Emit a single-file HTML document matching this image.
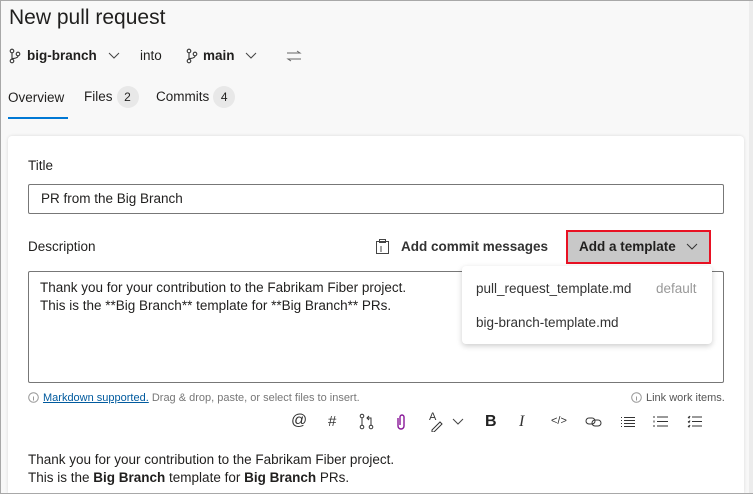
<!DOCTYPE html>
<html><head><meta charset="utf-8"><style>
*{box-sizing:border-box;margin:0;padding:0}
html,body{width:753px;height:494px;overflow:hidden}
body{background:#f8f8f8;font-family:"Liberation Sans",sans-serif;color:#201f1e;position:relative}
.frame{position:absolute;left:0;top:0;width:753px;height:494px;border:1px solid #a8a8a8;border-right:none;z-index:5;pointer-events:none}
.a{position:absolute;white-space:nowrap}
.card{position:absolute;left:8px;top:136px;width:736px;height:357px;background:#fff;border-radius:4px 4px 0 0;box-shadow:0 0 3px rgba(0,0,0,.12)}
.badge{display:inline-block;background:#e8e8e8;border-radius:11px;width:22px;height:22px;text-align:center;line-height:22px;font-size:12px;margin-left:4px}
svg{position:absolute}
</style></head><body>
<div class="frame"></div>
<div class="a" style="right:0;top:0;width:4px;height:494px;background:#ececec"></div>
<div class="a" style="left:9px;top:6px;font-size:21px;">New pull request</div>

<svg style="left:9px;top:48px" width="12" height="16" viewBox="0 0 12 16" fill="none" stroke="#333" stroke-width="1.1"><circle cx="3" cy="3" r="1.8"/><circle cx="3" cy="13" r="1.8"/><circle cx="9" cy="6" r="1.8"/><path d="M3 5v6M9 8c0 3-6 2-6 3"/></svg>
<div class="a" style="left:27px;top:48px;font-size:13.5px;font-weight:bold">big-branch</div>
<svg style="left:108px;top:52px" width="12" height="8"><path d="M1 1l5 5 5-5" stroke="#444" fill="none"/></svg>
<div class="a" style="left:140px;top:48px;font-size:13.5px">into</div>
<svg style="left:186px;top:48px" width="12" height="16" viewBox="0 0 12 16" fill="none" stroke="#333" stroke-width="1.1"><circle cx="3" cy="3" r="1.8"/><circle cx="3" cy="13" r="1.8"/><circle cx="9" cy="6" r="1.8"/><path d="M3 5v6M9 8c0 3-6 2-6 3"/></svg>
<div class="a" style="left:203px;top:48px;font-size:13.5px;font-weight:bold">main</div>
<svg style="left:245px;top:52px" width="12" height="8"><path d="M1 1l5 5 5-5" stroke="#444" fill="none"/></svg>
<svg style="left:286px;top:50px" width="16" height="12"><path d="M1 3h13l-3-2M15 9H2l3 2" stroke="#666" fill="none"/></svg>

<div class="a" style="left:8px;top:90px;font-size:13.5px">Overview</div>
<div class="a" style="left:8px;top:117px;width:60px;height:2px;background:#0078d4"></div>
<div class="a" style="left:84px;top:86px;font-size:13.5px;line-height:22px">Files<span class="badge">2</span></div>
<div class="a" style="left:156px;top:86px;font-size:13.5px;line-height:22px">Commits<span class="badge">4</span></div>

<div class="card"></div>
<div class="a" style="left:28px;top:158px;font-size:13.5px">Title</div>
<div class="a" style="left:28px;top:184px;width:696px;height:30px;border:1px solid #777;border-radius:2px;font-size:13.5px;padding:6px 12px">PR from the Big Branch</div>
<div class="a" style="left:28px;top:239px;font-size:13.5px">Description</div>
<svg style="left:375px;top:238px" width="16" height="17" fill="none" stroke="#444"><rect x="1.5" y="3.5" width="12" height="12"/><rect x="4.5" y="1.5" width="6" height="3"/><path d="M6 8v6"/></svg>
<div class="a" style="left:401px;top:239px;font-size:13.5px;font-weight:bold;color:#333">Add commit messages</div>
<div class="a" style="left:566px;top:230px;width:145px;height:34px;background:#c8c8c8;border:2px solid #e81123"></div>
<div class="a" style="left:579px;top:239px;font-size:13.5px;font-weight:bold">Add a template</div>
<svg style="left:686px;top:243px" width="12" height="8"><path d="M1 1l5 5 5-5" stroke="#333" fill="none"/></svg>

<div class="a" style="left:28px;top:271px;width:696px;height:112px;border:1px solid #777;border-radius:2px;font-size:13.5px;line-height:18px;padding:7px 11px">Thank you for your contribution to the Fabrikam Fiber project.<br>This is the **Big Branch** template for **Big Branch** PRs.</div>
<div class="a" style="left:462px;top:266px;width:250px;height:78px;background:#fff;border-radius:4px;box-shadow:0 2px 6px rgba(0,0,0,.2)"></div>
<div class="a" style="left:476px;top:281px;font-size:13.5px;color:#333">pull_request_template.md</div>
<div class="a" style="left:656px;top:281px;font-size:13.5px;color:#999">default</div>
<div class="a" style="left:476px;top:315px;font-size:13.5px;color:#333">big-branch-template.md</div>

<svg style="left:28px;top:392px" width="11" height="11"><circle cx="5.5" cy="5.5" r="4.8" stroke="#999" fill="none"/><path d="M5.5 4.5v4" stroke="#999"/></svg>
<div class="a" style="left:43px;top:392px;font-size:11px;color:#777"><span style="color:#005a9e;text-decoration:underline">Markdown supported.</span> Drag &amp; drop, paste, or select files to insert.</div>
<svg style="left:631px;top:392px" width="11" height="11"><circle cx="5.5" cy="5.5" r="4.8" stroke="#999" fill="none"/><path d="M5.5 4.5v4" stroke="#999"/></svg>
<div class="a" style="left:646px;top:392px;font-size:11px;color:#555">Link work items.</div>

<div class="a" style="left:291px;top:412px;font-size:16px;color:#333">@</div>
<div class="a" style="left:328px;top:413px;font-size:15px;color:#333">#</div>
<svg style="left:359px;top:413px" width="16" height="18" fill="none" stroke="#333"><circle cx="3" cy="3" r="1.8"/><circle cx="3" cy="14" r="1.8"/><circle cx="12" cy="14" r="1.8"/><path d="M3 5v7M12 12V5H8M10 3L8 5l2 2"/></svg>
<svg style="left:396px;top:413px" width="10" height="18" fill="none" stroke="#881798" stroke-width="1.4"><path d="M2 5v8a3 3 0 006 0V4a2 2 0 00-4 0v8"/></svg>
<div class="a" style="left:429px;top:411px;font-size:11px;color:#333">A</div>
<svg style="left:430px;top:420px" width="14" height="12" fill="none" stroke="#333"><path d="M2 10l8-8 2 2-8 8H2z"/></svg>
<svg style="left:452px;top:418px" width="12" height="8"><path d="M1 1l5 5 5-5" stroke="#444" fill="none"/></svg>
<div class="a" style="left:485px;top:413px;font-size:16px;font-weight:bold;color:#222">B</div>
<div class="a" style="left:519px;top:413px;font-size:16px;font-style:italic;font-family:'Liberation Serif',serif;color:#333">I</div>
<div class="a" style="left:551px;top:415px;font-size:11px;color:#333">&lt;/&gt;</div>
<svg style="left:585px;top:416px" width="18" height="12" fill="none" stroke="#333"><rect x="1" y="2" width="9" height="6" rx="3"/><rect x="7" y="4" width="9" height="6" rx="3"/></svg>
<svg style="left:620px;top:416px" width="16" height="12" stroke="#333"><path d="M1 1.5h1M4 1.5h11M1 4.5h1M4 4.5h11M1 7.5h1M4 7.5h11M1 10.5h1M4 10.5h11"/></svg>
<svg style="left:653px;top:415px" width="16" height="13" stroke="#333"><path d="M4 2h11M4 6.5h11M4 11h11M1 1v2M1 5.5v2M1 10v2"/></svg>
<svg style="left:687px;top:415px" width="16" height="13" stroke="#333"><path d="M5 2h10M5 6.5h10M5 11h10M1 2l1 1 1-2M1 6.5l1 1 1-2M1 11l1 1 1-2"/></svg>

<div class="a" style="left:28px;top:451px;font-size:13.5px;line-height:18px">Thank you for your contribution to the Fabrikam Fiber project.<br>This is the <b>Big Branch</b> template for <b>Big Branch</b> PRs.</div>
</body></html>
